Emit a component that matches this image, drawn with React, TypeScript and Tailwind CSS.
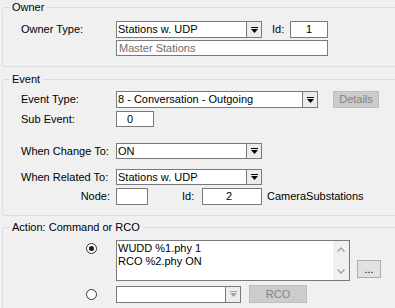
import { ReactNode } from "react";

function Arrow({ disabled = false }: { disabled?: boolean }) {
  return (
    <div className="flex h-full w-[15px] shrink-0 items-center justify-center border-l border-[#7a7a7a] bg-[#ececec]">
      <svg width="7" height="6" viewBox="0 0 7 6" fill={disabled ? "#a0a0a0" : "#000"}>
        <rect x="0" y="0" width="7" height="1" />
        <path d="M0 2h7L3.5 6z" />
      </svg>
    </div>
  );
}

function Combo({ value, width, height = "h-[16px]", disabled = false }: { value?: string; width: string; height?: string; disabled?: boolean }) {
  return (
    <div className={`flex ${width} ${height} shrink-0 items-stretch border border-[#7a7a7a] bg-white`}>
      <div className="flex flex-1 items-center overflow-hidden pl-[1px] leading-none">{value}</div>
      <Arrow disabled={disabled} />
    </div>
  );
}

function Field({ value, width, height = "h-[16px]", className = "" }: { value?: string; width: string; height?: string; className?: string }) {
  return (
    <div className={`flex ${width} ${height} shrink-0 items-center border border-[#7a7a7a] bg-white leading-none ${className}`}>
      {value}
    </div>
  );
}

function Group({ title, children, className = "" }: { title: string; children: ReactNode; className?: string }) {
  return (
    <fieldset className={`ml-[2px] w-[420px] rounded-[3px] border border-[#dcdcdc] ${className}`}>
      <legend className="ml-[6px] px-[3px] leading-[13px]">{title}</legend>
      {children}
    </fieldset>
  );
}

function Radio({ checked = false }: { checked?: boolean }) {
  return (
    <div className="flex h-[11px] w-[11px] items-center justify-center rounded-full border border-[#333333] bg-white">
      {checked && <div className="h-[5px] w-[5px] rounded-full bg-[#1a1a1a]" />}
    </div>
  );
}

export default function App() {
  return (
    <div className="h-[308px] w-[395px] overflow-hidden bg-[#f0f0f0] pt-[1px] font-['Liberation_Sans',Arial,sans-serif] text-[11px] text-black">
      {/* Owner */}
      <Group title="Owner">
        <div className="pl-[18px] pt-[7px] pb-[10px]">
          <div className="flex h-[17px] items-center">
            <span className="w-[95px] shrink-0">Owner Type:</span>
            <Combo value="Stations w. UDP" width="w-[146px]" height="h-[17px]" />
            <span className="ml-[10px] w-[18px]">Id:</span>
            <Field value="1" width="w-[38px]" height="h-[17px]" className="justify-center" />
          </div>
          <div className="mt-[2px] pl-[95px]">
            <Field value="Master Stations" width="w-[212px]" className="pl-[2px] text-[#6d6d6d]" />
          </div>
        </div>
      </Group>

      {/* Event */}
      <Group title="Event" className="mt-[6px]">
        <div className="pl-[18px] pt-[5px] pb-[10px]">
          <div className="flex h-[17px] items-center">
            <span className="w-[95px] shrink-0">Event Type:</span>
            <Combo value="8 - Conversation - Outgoing" width="w-[202px]" height="h-[17px]" />
            <button className="ml-[15px] h-[17px] w-[46px] border border-[#bfbfbf] bg-[#cccccc] leading-none text-[#838383]">
              Details
            </button>
          </div>
          <div className="mt-[3px] flex h-[16px] items-center">
            <span className="w-[95px] shrink-0">Sub Event:</span>
            <Field value="0" width="w-[38px]" className="pl-[10px]" />
          </div>
          <div className="mt-[16px] flex h-[16px] items-center">
            <span className="w-[95px] shrink-0">When Change To:</span>
            <Combo value="ON" width="w-[146px]" />
          </div>
          <div className="mt-[10px] flex h-[16px] items-center">
            <span className="w-[95px] shrink-0">When Related To:</span>
            <Combo value="Stations w. UDP" width="w-[146px]" />
          </div>
          <div className="mt-[3px] flex h-[17px] items-center">
            <span className="w-[89px] shrink-0 text-right">Node:</span>
            <Field width="ml-[6px] w-[32px]" height="h-[17px]" />
            <span className="ml-[34px] w-[20px]">Id:</span>
            <Field value="2" width="w-[60px]" height="h-[17px]" className="justify-center pr-[6px]" />
            <span className="ml-[5px]">CameraSubstations</span>
          </div>
        </div>
      </Group>

      {/* Action */}
      <Group title="Action: Command or RCO" className="mt-[5px]">
        <div className="pl-[18px] pt-[6px] pb-[10px]">
          <div className="flex items-start">
            <div className="w-[95px] shrink-0 pl-[65px] pt-[3px]">
              <Radio checked />
            </div>
            <div className="flex h-[41px] w-[234px] border border-[#7a7a7a] bg-white">
              <div className="flex-1 pl-[1px] pt-[1px] leading-[13px]">
                <div>WUDD %1.phy 1</div>
                <div>RCO %2.phy ON</div>
              </div>
              <div className="flex w-[16px] flex-col items-center justify-between bg-[#f0f0f0] py-[6px]">
                <svg width="8" height="5" viewBox="0 0 8 5" fill="none" stroke="#a6a6a6" strokeWidth="1.5">
                  <path d="M0.5 4.5L4 1l3.5 3.5" />
                </svg>
                <svg width="8" height="5" viewBox="0 0 8 5" fill="none" stroke="#a6a6a6" strokeWidth="1.5">
                  <path d="M0.5 0.5L4 4l3.5-3.5" />
                </svg>
              </div>
            </div>
            <button className="ml-[7px] mt-[20px] h-[18px] w-[24px] border border-[#adadad] bg-[#e1e1e1] leading-none">
              ...
            </button>
          </div>
          <div className="mt-[4px] flex items-center">
            <div className="w-[95px] shrink-0 pl-[65px]">
              <Radio />
            </div>
            <Combo width="w-[125px]" height="h-[17px]" disabled />
            <button className="ml-[8px] h-[18px] w-[58px] border border-[#bfbfbf] bg-[#cccccc] leading-none text-[#838383]">
              RCO
            </button>
          </div>
        </div>
      </Group>
    </div>
  );
}
